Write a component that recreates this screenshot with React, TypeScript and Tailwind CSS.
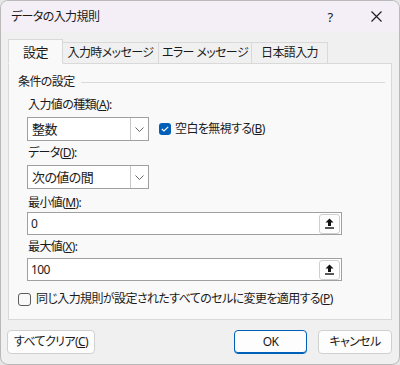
// Data validation dialog (データの入力規則)

const font = "font-['Noto_Sans','Noto_Sans_CJK_JP',sans-serif] [font-feature-settings:'palt'] tracking-[-0.6px]";

export default function App() {
  return (
    <div className={`w-[400px] h-[365px] bg-[#e6e6e6] text-[12px] leading-[16px] text-[#1a1a1a] ${font}`}>
      <div className="w-full h-full rounded-[8px] border border-[#b9b9b9] bg-[#f0f0f0] overflow-hidden flex flex-col">
        {/* Title bar */}
        <header className="h-[31px] shrink-0 bg-[#f4eef6] flex items-center pl-[10px]">
          <span className="flex-1">データの入力規則</span>
          <span className="w-[46px] text-center text-[13px]">?</span>
          <span className="w-[46px] flex justify-center">
            <svg width="11" height="11" viewBox="0 0 11 11">
              <path d="M0.5 0.5 L10.5 10.5 M10.5 0.5 L0.5 10.5" stroke="#1a1a1a" strokeWidth="1.1" />
            </svg>
          </span>
        </header>

        <div className="flex-1 px-[7px] pt-[8px]">
          {/* Tabs */}
          <div className="flex items-end h-[24px]">
            <Tab label="設定" width="w-[55px]" active />
            <Tab label="入力時メッセージ" width="w-[97px]" />
            <Tab label="エラー メッセージ" width="w-[94px]" />
            <Tab label="日本語入力" width="w-[77px]" />
          </div>

          {/* Tab panel */}
          <section className="h-[257px] border border-[#d9d9d9] bg-[#f9f9f9] -mt-px pt-[10px] pl-[9px] pr-[6px]">
            <div className="flex items-center gap-[6px]">
              <span>条件の設定</span>
              <span className="flex-1 h-px bg-[#dadada] mt-px" />
            </div>

            <div className="pl-[9px]">
              <Label className="mt-[7px] ml-px">入力値の種類(<u>A</u>):</Label>
              <div className="flex items-center mt-[4px]">
                <Select value="整数" />
                <Check checked className="ml-[10px]" />
                <span className="ml-[4px]">空白を無視する(<u>B</u>)</span>
              </div>

              <Label className="mt-[4px] ml-px">データ(<u>D</u>):</Label>
              <div className="mt-[4px]">
                <Select value="次の値の間" />
              </div>

              <Label className="mt-[6px] ml-px">最小値(<u>M</u>):</Label>
              <RangeInput value="0" className="mt-px" />

              <Label className="mt-[4px] ml-px">最大値(<u>X</u>):</Label>
              <RangeInput value="100" className="mt-[3px]" />
            </div>

            <div className="flex items-center mt-[10px]">
              <Check />
              <span className="ml-[5px]">同じ入力規則が設定されたすべてのセルに変更を適用する(<u>P</u>)</span>
            </div>
          </section>

          {/* Bottom buttons */}
          <footer className="flex items-center mt-[10px] -ml-px">
            <Button label={<>すべてクリア(<u>C</u>)</>} width="w-[88px]" />
            <span className="flex-1" />
            <Button label="OK" width="w-[73px]" primary />
            <Button label="キャンセル" width="w-[74px]" className="ml-[11px]" />
          </footer>
        </div>
      </div>
    </div>
  );
}

function Tab({ label, width, active = false }: { label: string; width: string; active?: boolean }) {
  return (
    <div
      className={`${width} flex items-center justify-center border border-[#d9d9d9] -ml-px first:ml-0 ${
        active ? "h-[25px] bg-[#f9f9f9] border-b-[#f9f9f9] relative z-10 text-[13px]" : "h-[22px] bg-[#f0f0f0]"
      }`}
    >
      {label}
    </div>
  );
}

function Label({ children, className = "" }: { children: React.ReactNode; className?: string }) {
  return <div className={className}>{children}</div>;
}

function Select({ value }: { value: string }) {
  return (
    <div className="w-[122px] h-[24px] border border-[#a0a0a0] bg-white flex items-stretch">
      <span className="flex-1 pl-[4px] flex items-center text-[13px]">{value}</span>
      <span className="w-[18px] border-l border-[#c8c8c8] flex items-center justify-center">
        <svg width="9" height="5" viewBox="0 0 9 5">
          <path d="M0.5 0.5 L4.5 4.5 L8.5 0.5" fill="none" stroke="#666" strokeWidth="1" />
        </svg>
      </span>
    </div>
  );
}

function Check({ checked = false, className = "" }: { checked?: boolean; className?: string }) {
  return checked ? (
    <span className={`w-[12px] h-[12px] rounded-[3px] bg-[#005fb8] flex items-center justify-center ${className}`}>
      <svg width="8" height="6" viewBox="0 0 8 6">
        <path d="M0.8 3 L3 5 L7.2 0.8" fill="none" stroke="#fff" strokeWidth="1.1" />
      </svg>
    </span>
  ) : (
    <span className={`w-[13px] h-[13px] rounded-[3px] border border-[#5c5c5c] bg-[#f9f9f9] ${className}`} />
  );
}

function RangeInput({ value, className = "" }: { value: string; className?: string }) {
  return (
    <div className={`w-[315px] h-[23px] border border-[#a0a0a0] bg-white flex items-center ${className}`}>
      <span className="flex-1 pl-[3px] text-[12px]">{value}</span>
      <span className="w-[21px] h-[20px] mr-px rounded-[3px] border border-[#cfcfcf] bg-[#fdfdfd] flex items-center justify-center">
        <svg width="9" height="11" viewBox="0 0 9 11">
          <path d="M4.5 0.5 L8.5 4.5 L6 4.5 L6 8 L3 8 L3 4.5 L0.5 4.5 Z" fill="#111" />
          <rect x="0" y="9.3" width="9" height="1.4" fill="#111" />
        </svg>
      </span>
    </div>
  );
}

function Button({
  label,
  width,
  primary = false,
  className = "",
}: {
  label: React.ReactNode;
  width: string;
  primary?: boolean;
  className?: string;
}) {
  return (
    <button
      className={`${width} h-[24px] rounded-[4px] bg-[#fdfdfd] flex items-center justify-center ${
        primary ? "border border-[#005fb8] shadow-[inset_0_-1px_0_#005fb8]" : "border border-[#d0d0d0]"
      } ${className}`}
    >
      {label}
    </button>
  );
}
